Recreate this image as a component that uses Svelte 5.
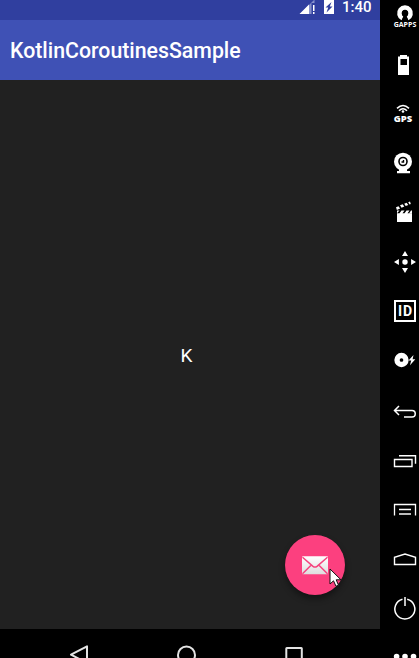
<script>
  const title = 'KotlinCoroutinesSample';
</script>

<div class="emulator">
  <main class="phone">
    <header class="status">
      <svg width="38" height="20" viewBox="298 0 38 20">
        <path d="M300 14 L314.500 -.5 V14Z" fill="#8791cb" />
        <path d="M299.500 14 L309 4.500 V14Z" fill="#fff" />
        <path d="M311.500 3h4v11h-4z" fill="#303f9f" />
        <path d="M313 5h1.500v6H313zM313 12h1.500v2H313z" fill="#fff" />
        <path d="M324 0h10v14h-10z" fill="#fff" />
        <path d="M331.500 2 L325.500 7.500 H328.200 L326.500 12.500 L332.500 6.500 H329.800Z" fill="#303f9f" />
      </svg>
      <span class="time">1:40</span>
    </header>
    <div class="toolbar"><h1>{title}</h1></div>
    <section class="content">
      <p>K</p>
      <button class="fab" aria-label="Send mail">
        <svg width="60" height="60" viewBox="285.500 534.700 60 60">
          <defs>
            <linearGradient id="paper" x1="0" y1="0" x2="0" y2="1">
              <stop offset="0" stop-color="#fff" />
              <stop offset="1" stop-color="#dedede" />
            </linearGradient>
          </defs>
          <rect x="302.500" y="556" width="26" height="18" rx="1" fill="url(#paper)" />
          <path d="M303 557 L313.500 566 Q315.500 567.500 317.500 566 L328 557 M303 573.500 L311.800 564.700 M328 573.500 L319.200 564.700" fill="none" stroke="#f5437e" stroke-width="1.500" />
        </svg>
      </button>
      <svg class="cursor" width="14" height="20" viewBox="0 0 14 20">
        <path d="M1 1 V16 L4.500 12.800 L7 18.300 L9.500 17.200 L7.200 11.800 H12Z" fill="#fff" stroke="#111" stroke-width="1" />
      </svg>
    </section>
    <nav>
      <svg width="380" height="29" viewBox="0 629 380 29" fill="none" stroke="#e3e3e3" stroke-width="2">
        <path d="M87 646.300 V663 L71 654.700Z" stroke-linejoin="round" />
        <circle cx="186.500" cy="655" r="8.500" />
        <rect x="286.300" y="648" width="15.500" height="16" rx=".5" />
      </svg>
    </nav>
  </main>

  <aside>
    <svg viewBox="380 -8 39 49">
      <path d="M403.800 16 A3.200 3.200 0 1 1 406.200 16 L408.500 20.300 A7.900 7.900 0 1 0 401.500 20.300Z" />
      <circle cx="405" cy="13.500" r="3.200" fill="#000" />
      <path d="M403.800 15h2.400l2 5.500h-6.400z" fill="#000" />
      <text class="label" x="393.700" y="27" font-size="7.600" font-weight="700" textLength="22.600" lengthAdjust="spacingAndGlyphs">GAPPS</text>
    </svg>
    <svg viewBox="380 41 39 49">
      <path fill-rule="evenodd" d="M400 55h7v1.500h2V75H398V56.500h2zM400.500 59v6h6.500v-6z" />
    </svg>
    <svg viewBox="380 90 39 49">
      <path class="line" d="M397 108.300 Q403 102.700 409 108.300 M399 110.800 Q403 106.700 407 110.800" stroke-width="1.600" />
      <circle cx="403" cy="111.500" r="1.300" />
      <text class="label" x="393.700" y="121.900" font-size="8.700" font-weight="800" textLength="18.500" lengthAdjust="spacingAndGlyphs">GPS</text>
    </svg>
    <svg viewBox="380 139 39 49">
      <circle cx="403" cy="161.700" r="9" />
      <path d="M399 169h8v2h3v2.300h-13V171h2z" />
      <circle cx="403" cy="161.500" r="4" fill="none" stroke="#000" stroke-width="1.600" />
      <path d="M403.500 160v2h-2" fill="none" stroke="#000" stroke-width="1.400" />
    </svg>
    <svg viewBox="380 188 39 49">
      <path d="M397 213.300h15v8.700h-15zM397 210.500h2.500l-2.500 2.800zM401.500 210.500h3l-2 2.800h-3zM406.500 210.500h3l-2 2.800h-3z" />
      <path d="M411 210.500h1v3h-3z" />
      <path d="M396 207.200l2.500-1 1.600 2.400-3.200 1.400zM400 205.300l2.700-1.100 1.600 2.400-2.700 1.100zM404.200 203.700l2.400-1 1.700 2.400-2.600 1zM408.200 202.200l1.800-.6.800 2.500-1.300.5z" />
    </svg>
    <svg viewBox="380 237 39 49">
      <circle cx="405" cy="262" r="2.700" />
      <path d="M405 251l3 4.900h-6zM405 273l3-4.900h-6zM394 262l4.900-3v6zM416 262l-4.900-3v6z" />
    </svg>
    <svg viewBox="380 286 39 49">
      <rect class="line" x="395" y="301" width="20" height="20" stroke-width="2" />
      <text x="398" y="316" font-size="14" font-weight="700" textLength="14">ID</text>
    </svg>
    <svg viewBox="380 335 39 49">
      <circle cx="401.500" cy="360" r="4.500" fill="none" stroke="#fff" stroke-width="5.300" />
      <path d="M413.500 355l-5 5.500h2.700l-1.200 4.700 5.300-6h-2.700z" />
    </svg>
    <svg viewBox="380 384 39 49">
      <path class="line" d="M399 406l-4.500 4.500 4.500 4.500M394.500 410.500H412a3.200 3.200 0 0 1 0 6.500H404" stroke-width="1.500" />
    </svg>
    <svg viewBox="380 433 39 49">
      <path class="line" d="M394.500 459.500h17.500v7h-17.500zM399 455.800h16.500v8" stroke-width="1.400" />
    </svg>
    <svg viewBox="380 482 39 49">
      <path class="line" d="M394.500 515.500v-11h21v11M399 509.500h12" stroke-width="1.300" />
      <path d="M399 513h12v2h-12z" fill="#bbb" />
    </svg>
    <svg viewBox="380 531 39 49">
      <path class="line" d="M394.500 564.500v-7.200L405 554l10.500 3.300v7.200z" stroke-width="1.400" />
    </svg>
    <svg viewBox="380 580 39 49">
      <path class="line" d="M402.500 599.300a10 10 0 1 0 4.700 0M405 597v9" stroke-width="1.500" />
    </svg>
    <svg viewBox="380 629 39 49">
      <circle cx="396.600" cy="656.500" r="2.800" /><circle cx="405" cy="656.500" r="2.800" /><circle cx="413.500" cy="656.500" r="2.800" />
    </svg>
  </aside>
</div>

<style>
  .emulator {
    display: flex;
    width: 419px;
    height: 658px;
    overflow: hidden;
    background: #000;
    color: #fff;
    font-family: Roboto, sans-serif;
  }
  .phone {
    display: flex;
    flex-direction: column;
    width: 380px;
  }
  svg {
    display: block;
  }
  .status {
    display: flex;
    height: 20px;
    padding-left: 298px;
    background: #303f9f;
  }
  .time {
    margin-left: 6px;
    font-size: 15px;
    font-weight: 500;
    line-height: 15px;
  }
  .toolbar {
    display: flex;
    align-items: center;
    height: 60px;
    padding-left: 10px;
    background: #3f51b5;
  }
  h1 {
    margin: 2px 0 0;
    font-size: 21.3px;
    font-weight: 500;
    line-height: 26px;
  }
  .content {
    position: relative;
    display: flex;
    align-items: center;
    justify-content: center;
    height: 549px;
    background: #212121;
  }
  p {
    margin: 2px 7px 0 0;
    font-size: 19px;
    line-height: 24px;
  }
  .fab {
    position: absolute;
    left: 285px;
    top: 454.7px;
    width: 60px;
    height: 60px;
    padding: 0;
    border: 0;
    border-radius: 50%;
    background: #fc407f;
    box-shadow: 0 4px 6px rgba(0, 0, 0, 0.4);
  }
  .cursor {
    position: absolute;
    left: 329px;
    top: 488px;
  }
  nav {
    height: 29px;
    background: #000;
  }
  aside {
    width: 39px;
    margin-top: -8px;
  }
  aside svg {
    width: 39px;
    height: 49px;
    fill: #fff;
  }
  aside .line {
    fill: none;
    stroke: #fff;
  }
  .label {
    font-family: "Open Sans", sans-serif;
  }
</style>
